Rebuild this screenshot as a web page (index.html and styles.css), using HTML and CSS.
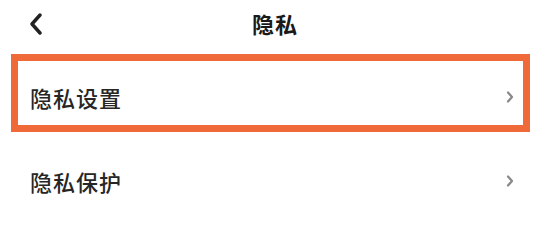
FILE: index.html
```html
<!DOCTYPE html>
<html lang="zh-CN">
<head>
<meta charset="utf-8">
<link rel="stylesheet" href="styles.css">
</head>
<body>
<div class="page">
  <header class="header">
    <div class="back">
      <svg width="14" height="22" viewBox="0 0 14 22"><path d="M11 2 L3 11 L11 20" fill="none" stroke="#222" stroke-width="3.4" stroke-linecap="round" stroke-linejoin="round"/></svg>
    </div>
    <div class="title">隐私</div>
    <div></div>
  </header>
  <div class="list">
    <div class="item highlight">
      <div class="row first">
        <span class="label">隐私设置</span>
        <svg class="chev" width="8" height="12" viewBox="0 0 8 12"><path d="M2 1.5 L6 6 L2 10.5" fill="none" stroke="#888" stroke-width="2.2" stroke-linecap="round" stroke-linejoin="round"/></svg>
      </div>
    </div>
    <div class="item plain">
      <div class="row">
        <span class="label">隐私保护</span>
        <svg class="chev" width="8" height="12" viewBox="0 0 8 12"><path d="M2 1.5 L6 6 L2 10.5" fill="none" stroke="#888" stroke-width="2.2" stroke-linecap="round" stroke-linejoin="round"/></svg>
      </div>
    </div>
  </div>
</div>
</body>
</html>
```
FILE: styles.css
```css
html, body {
  margin: 0;
  padding: 0;
  background: #ffffff;
}
.page {
  width: 550px;
  height: 224px;
  font-family: "Noto Sans CJK SC", "Noto Sans", sans-serif;
  color: #2b2b2b;
  overflow: hidden;
}
.header {
  height: 46px;
  display: grid;
  grid-template-columns: 1fr auto 1fr;
  align-items: center;
  padding-left: 29px;
  padding-right: 29px;
  box-sizing: border-box;
}
.back {
  display: flex;
  align-items: center;
  height: 22px;
  padding-top: 2px;
}
.title {
  font-size: 22px;
  font-weight: 700;
  color: #1a1a1a;
  line-height: 1;
  letter-spacing: 1px;
}
.list {
  padding-top: 8px;
  padding-left: 11px;
  width: 519px;
}
.item {
  border: 7px solid transparent;
}
.highlight {
  border-color: #ef6939;
}
.plain {
  margin-top: 10px;
}
.row {
  height: 64px;
  display: flex;
  align-items: center;
  justify-content: space-between;
  padding: 0 9px 0 12px;
  box-sizing: border-box;
}
.row.first {
  padding-top: 8px;
}
.label {
  font-size: 22px;
  font-weight: 500;
  letter-spacing: 1px;
  line-height: 1;
  color: #262626;
}
.chev {
  display: block;
}
```
